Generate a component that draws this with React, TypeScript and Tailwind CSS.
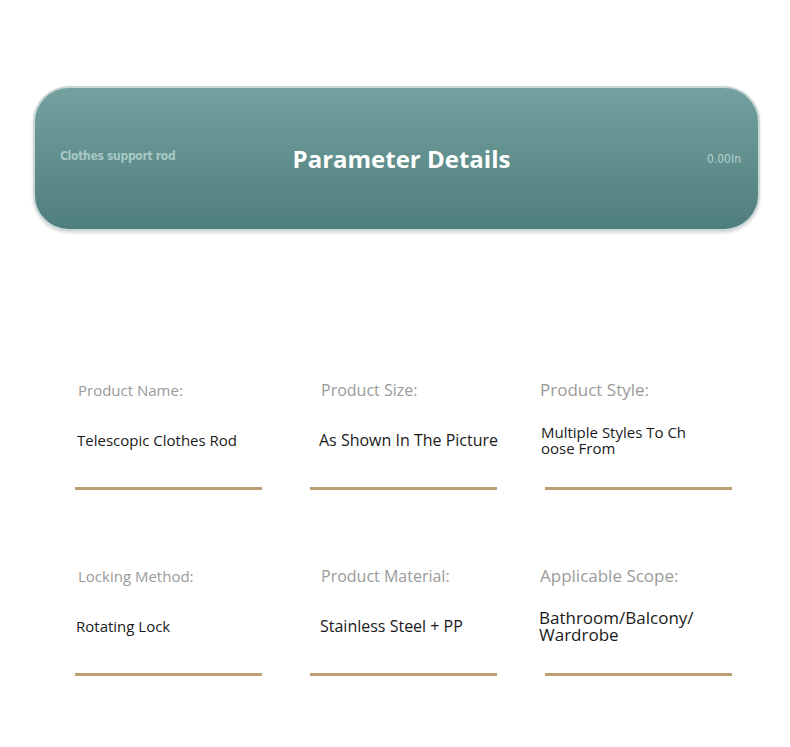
const CELLS = [
  { label: "Product Name:", value: "Telescopic Clothes Rod", labelCls: "pl-[3px] text-[15px]", valueCls: "pl-[2px] text-[15px]" },
  { label: "Product Size:", value: "As Shown In The Picture", labelCls: "pl-[11px] text-[16px]", valueCls: "pl-[9px] text-[16px]" },
  { label: "Product Style:", value: "Multiple Styles To Ch oose From", labelCls: "-ml-[5px] text-[17px]", valueCls: "-ml-[4px] w-[150px] text-[15px] leading-[16px]" },
  { label: "Locking Method:", value: "Rotating Lock", labelCls: "pl-[3px] text-[15px]", valueCls: "pl-[1px] text-[15px]" },
  { label: "Product Material:", value: "Stainless Steel + PP", labelCls: "pl-[11px] text-[16px]", valueCls: "pl-[10px] text-[16px]" },
  { label: "Applicable Scope:", value: "Bathroom/Balcony/ Wardrobe", labelCls: "-ml-[5px] text-[17px]", valueCls: "-ml-[6px] w-[175px] text-[17px] leading-[17px]" },
];

export default function App() {
  return (
    <div className="w-[790px] h-[747px] bg-white font-['Open_Sans','Noto_Sans',sans-serif] overflow-hidden">
      <div className="pt-[86px] pl-[33px]">
        <div className="w-[727px] h-[145px] rounded-[36px] border-2 border-[#c9d7d6] bg-gradient-to-b from-[#74a19f] to-[#4e7e7d] shadow-[0_2px_3px_rgba(0,0,0,0.15)] flex items-center pl-[25px] pr-[17px]">
          <div className="w-[230px] -mt-[6px] text-[12px] font-['Liberation_Sans_Narrow','DejaVu_Sans_Condensed',sans-serif] font-bold text-[#a8c8c5] tracking-tight">
            Clothes support rod
          </div>
          <div className="flex-1 text-center text-[24px] font-bold text-white ml-[2px]">Parameter Details</div>
          <div className="w-[230px] text-right text-[12px] font-['DejaVu_Sans_Condensed',sans-serif] text-[#b6d3d0]">0.00In</div>
        </div>
      </div>
      <div className="mt-[138px] pl-[75px] grid grid-cols-[187px_187px_187px] gap-x-[48px] gap-y-[65px]">
        {CELLS.map((c) => (
          <div key={c.label} className="flex flex-col">
            <div className="h-[50px] flex items-center -mt-[4px]">
              <div className={`text-[#9a9a9a] whitespace-nowrap ${c.labelCls}`}>{c.label}</div>
            </div>
            <div className="h-[50px] flex items-center">
              <div className={`text-[#1a1a1a] ${c.valueCls} ${c.valueCls.includes("w-[") ? "" : "whitespace-nowrap"}`}>{c.value}</div>
            </div>
            <div className="mt-[22px] h-[3px] bg-[#bb9e72]" />
          </div>
        ))}
      </div>
    </div>
  );
}
